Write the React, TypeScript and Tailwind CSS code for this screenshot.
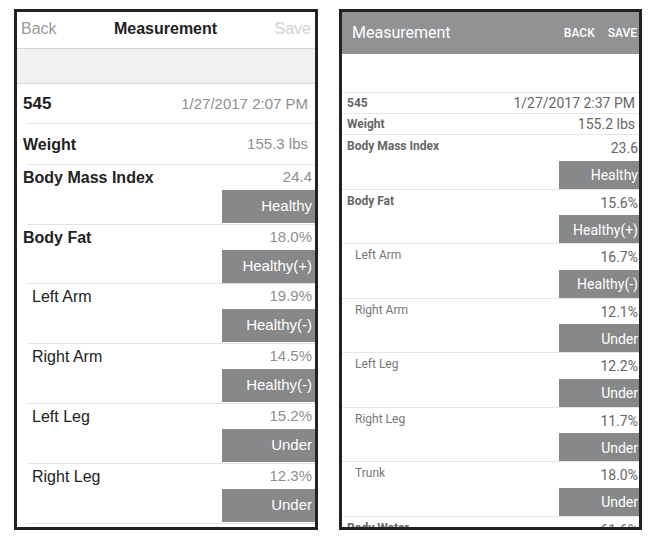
import React from 'react'

type Item = { label: string; value: string; status: string; sub?: boolean; h?: string }

const iosItems: Item[] = [
  { label: 'Body Mass Index', value: '24.4', status: 'Healthy', h: 'h-[60px]' },
  { label: 'Body Fat', value: '18.0%', status: 'Healthy(+)', h: 'h-[59px]' },
  { label: 'Left Arm', value: '19.9%', status: 'Healthy(-)', sub: true, h: 'h-[60px]' },
  { label: 'Right Arm', value: '14.5%', status: 'Healthy(-)', sub: true, h: 'h-[60px]' },
  { label: 'Left Leg', value: '15.2%', status: 'Under', sub: true, h: 'h-[60px]' },
  { label: 'Right Leg', value: '12.3%', status: 'Under', sub: true, h: 'h-[60px]' },
]

const androidItems: Item[] = [
  { label: 'Body Mass Index', value: '23.6', status: 'Healthy' },
  { label: 'Body Fat', value: '15.6%', status: 'Healthy(+)' },
  { label: 'Left Arm', value: '16.7%', status: 'Healthy(-)', sub: true },
  { label: 'Right Arm', value: '12.1%', status: 'Under', sub: true },
  { label: 'Left Leg', value: '12.2%', status: 'Under', sub: true },
  { label: 'Right Leg', value: '11.7%', status: 'Under', sub: true },
  { label: 'Trunk', value: '18.0%', status: 'Under', sub: true },
]

function IosScreen() {
  return (
    <div className="w-[304px] h-[521px] border-[3px] border-[#222] overflow-hidden bg-white font-['Liberation_Sans',Arial,sans-serif]">
      {/* nav bar */}
      <div className="h-[37px] flex items-center justify-between px-[4px] pb-[3px] border-b border-[#d6d6d8]">
        <span className="text-[16px] text-[#9a9a9a]">Back</span>
        <span className="text-[16px] font-bold text-[#222]">Measurement</span>
        <span className="text-[16px] text-[#d2d2d2]">Save</span>
      </div>
      <div className="h-[35px] bg-[#eff1f3] border-b border-[#d9d9db]" />

      <div className="h-[40px] flex items-center justify-between pl-[6px] pr-[7px] relative">
        <span className="text-[17px] font-bold text-[#222]">545</span>
        <span className="text-[15px] text-[#8e8e8e]">1/27/2017 2:07 PM</span>
        <div className="absolute left-[11px] right-0 bottom-0 h-px bg-[#e2e2e2]" />
      </div>
      <div className="h-[41px] flex items-center justify-between pl-[6px] pr-[7px] relative">
        <span className="text-[16px] font-bold text-[#222]">Weight</span>
        <span className="text-[15px] text-[#8e8e8e]">155.3 lbs</span>
        <div className="absolute left-[11px] right-0 bottom-0 h-px bg-[#e2e2e2]" />
      </div>

      {iosItems.map((it) => (
        <div key={it.label} className={`${it.h} flex flex-col relative`}>
          <div className={`h-[25px] flex items-center justify-between pr-[3px] ${it.sub ? 'pl-[15px]' : 'pl-[6px]'}`}>
            <span className={`text-[16px] text-[#222] ${it.sub ? '' : 'font-bold'}`}>{it.label}</span>
            <span className="text-[15px] text-[#8e8e8e]">{it.value}</span>
          </div>
          <div className="flex justify-end">
            <div className="w-[93px] h-[33px] bg-[#87888a] flex items-center justify-end pr-[3px]">
              <span className="text-[15px] text-white">{it.status}</span>
            </div>
          </div>
          <div className="absolute left-[11px] right-0 bottom-0 h-px bg-[#e2e2e2]" />
        </div>
      ))}
    </div>
  )
}

function AndroidScreen() {
  return (
    <div className="w-[303px] h-[521px] border-[3px] border-[#222] overflow-hidden bg-white font-['Roboto',Arial,sans-serif]">
      <div className="h-[42px] bg-[#909294] flex items-center justify-between pl-[10px] pr-[2px]">
        <span className="text-[16px] text-white">Measurement</span>
        <div className="flex gap-[13px] text-[12px] font-medium text-white">
          <span>BACK</span>
          <span>SAVE</span>
        </div>
      </div>
      <div className="h-[39px] border-b border-[#e6e6e6]" />

      <div className="h-[21px] flex items-center justify-between pl-[5px] pr-[4px] border-b border-[#e6e6e6]">
        <span className="text-[12px] font-bold text-[#666]">545</span>
        <span className="text-[14px] text-[#666]">1/27/2017 2:37 PM</span>
      </div>
      <div className="h-[21px] flex items-center justify-between pl-[5px] pr-[4px] border-b border-[#e6e6e6]">
        <span className="text-[12px] font-bold text-[#666]">Weight</span>
        <span className="text-[14px] text-[#666]">155.2 lbs</span>
      </div>

      {androidItems.map((it) => (
        <div key={it.label} className="h-[54.5px] flex flex-col border-b border-[#e6e6e6]">
          <div className={`h-[25.5px] flex items-start justify-between pt-[4px] pr-[1px] ${it.sub ? 'pl-[13px]' : 'pl-[5px]'}`}>
            <span className={`text-[12px] leading-[14px] ${it.sub ? 'text-[#777]' : 'font-bold text-[#666]'}`}>{it.label}</span>
            <span className="text-[14px] leading-[18px] text-[#666]">{it.value}</span>
          </div>
          <div className="flex justify-end">
            <div className="w-[80px] h-[28px] bg-[#87888a] flex items-center justify-end pr-[1px] pt-[1px]">
              <span className="text-[14px] leading-[18px] text-white">{it.status}</span>
            </div>
          </div>
        </div>
      ))}
      <div className="flex items-start justify-between pt-[4px] pl-[5px] pr-[1px]">
        <span className="text-[12px] leading-[14px] font-bold text-[#666]">Body Water</span>
        <span className="text-[14px] leading-[18px] text-[#666]">61.6%</span>
      </div>
    </div>
  )
}

export default function App() {
  return (
    <div className="w-[656px] h-[541px] bg-white flex items-start gap-[21px] pl-[14px] pt-[9px]">
      <IosScreen />
      <AndroidScreen />
    </div>
  )
}
